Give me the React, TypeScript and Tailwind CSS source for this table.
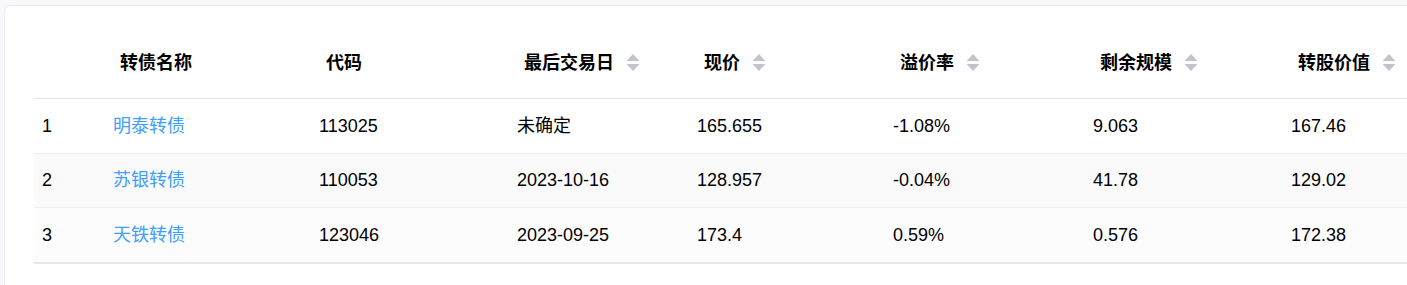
import React from "react";

const cols = "grid grid-cols-[71px_206px_198px_180px_196px_200px_198px_200px]";

const headers = [
    { title: "", sort: false },
    { title: "转债名称", sort: false },
    { title: "代码", sort: false },
    { title: "最后交易日", sort: true },
    { title: "现价", sort: true },
    { title: "溢价率", sort: true },
    { title: "剩余规模", sort: true },
    { title: "转股价值", sort: true },
];

const rows = [
    ["1", "明泰转债", "113025", "未确定", "165.655", "-1.08%", "9.063", "167.46"],
    ["2", "苏银转债", "110053", "2023-10-16", "128.957", "-0.04%", "41.78", "129.02"],
    ["3", "天铁转债", "123046", "2023-09-25", "173.4", "0.59%", "0.576", "172.38"],
];

// row style per index: height, border, bg
const rowCls = [
    "h-[55px] border-b border-[#ebeef5] bg-white",
    "h-[54px] border-b border-[#ebeef5] bg-[#fafafa]",
    "h-[56px] border-b-2 border-[#e4e7ed] bg-[#fcfcfd]",
];

const SortIcon = () => (
    <svg width="14" height="20" viewBox="0 0 14 20" className="ml-[12px] shrink-0">
        <path d="M7 1 L13.5 8 L0.5 8 Z" fill="#c0c4cc" />
        <path d="M0.5 11 L13.5 11 L7 18 Z" fill="#c0c4cc" />
    </svg>
);

const App = () => {
    return (
        <div className="h-[285px] w-[1407px] overflow-hidden bg-[#f8f8fa] pl-[4px] pt-[5px] font-['Liberation_Sans','Noto_Sans_CJK_SC',sans-serif] text-[18px] text-black">
            <div className="w-[1440px] h-[320px] rounded-[7px] border border-[#ebebf0] bg-white pl-[29px] pt-[21px]">
                {/* header */}
                <div className={`${cols} h-[72px] border-b border-[#e4e7ed]`}>
                    {headers.map((h, i) => (
                        <div key={i} className="flex items-center pl-[15px] pt-[1px] font-bold">
                            {h.title}
                            {h.sort ? <SortIcon /> : null}
                        </div>
                    ))}
                </div>
                {rows.map((r, ri) => (
                    <div key={ri} className={`${cols} ${rowCls[ri]}`}>
                        {r.map((c, ci) => (
                            <div key={ci} className={`flex items-center pl-[8px] ${ci === 1 ? "text-[#409eff]" : ""}`}>
                                {c}
                            </div>
                        ))}
                    </div>
                ))}
            </div>
        </div>
    );
};

export default App;
